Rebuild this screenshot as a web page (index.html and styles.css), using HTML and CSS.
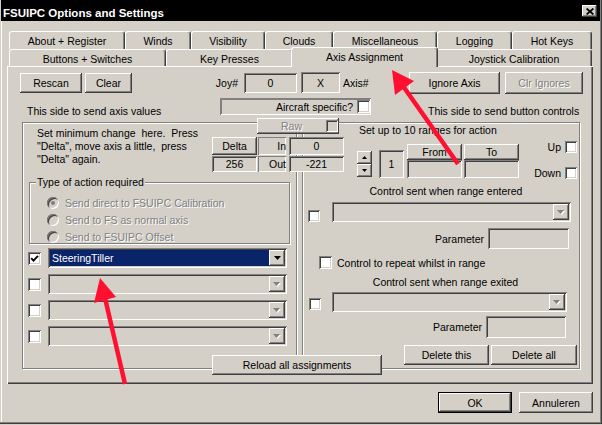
FILE: index.html
```html
<!DOCTYPE html>
<html>
<head>
<meta charset="UTF-8">
<title>FSUIPC Options and Settings</title>
<link rel="stylesheet" href="styles.css">
</head>
<body>
<div class="window">
	<div class="titlebar">
		<span class="title">FSUIPC Options and Settings</span>
		<span class="btn closebtn"><svg width="8" height="7" viewBox="0 0 8 7"><path d="M0.6 0.5L7.4 6.5M7.4 0.5L0.6 6.5" stroke="#000" stroke-width="1.7"/></svg></span>
	</div>

	<div class="tabs">
		<div class="tabrow back">
			<div class="tab">About + Register</div>
			<div class="tab">Winds</div>
			<div class="tab">Visibility</div>
			<div class="tab">Clouds</div>
			<div class="tab">Miscellaneous</div>
			<div class="tab">Logging</div>
			<div class="tab">Hot Keys</div>
		</div>
		<div class="tabrow front">
			<div class="tab">Buttons + Switches</div>
			<div class="tab">Key Presses</div>
			<div class="tab active">Axis Assignment</div>
			<div class="tab">Joystick Calibration</div>
		</div>
	</div>

	<div class="panel">
		<div class="toprow">
			<div class="btn b-rescan">Rescan</div>
			<div class="btn b-clear">Clear</div>
			<div class="lbl-joy">Joy#</div>
			<div class="field f-joy">0</div>
			<div class="field f-axis">X</div>
			<div class="lbl-axis">Axis#</div>
			<div class="btn b-ignore">Ignore Axis</div>
			<div class="btn b-clr dis">Clr Ignores</div>
		</div>

		<div class="siderow">
			<div class="sidelabel left">This side to send axis values</div>
			<div class="static aircraft">
				<span>Aircraft specific?</span>
				<span class="check"></span>
			</div>
			<div class="sidelabel right">This side to send button controls</div>
		</div>

		<div class="frames">
			<div class="frame left">
				<div class="deltatop">
					<div class="hint">Set minimum change  here.  Press
"Delta", move axis a little,  press
"Delta" again.</div>
					<div class="deltabox">
						<div class="btn raw">
							<span class="dis">Raw</span>
							<span class="check off"></span>
						</div>
						<div class="drow r1">
							<div class="btn d-key">Delta</div>
							<div class="static d-io">In</div>
							<div class="field d-val">0</div>
						</div>
						<div class="drow r2">
							<div class="field d-key">256</div>
							<div class="static d-io">Out</div>
							<div class="field d-val">-221</div>
						</div>
					</div>
				</div>

				<div class="frame typeframe">
					<span class="legend">Type of action required</span>
					<div class="radiorow"><span class="radio on"></span><span class="dis">Send direct to FSUIPC Calibration</span></div>
					<div class="radiorow"><span class="radio"></span><span class="dis">Send to FS as normal axis</span></div>
					<div class="radiorow"><span class="radio"></span><span class="dis">Send to FSUIPC Offset</span></div>
				</div>

				<div class="axisrows">
					<div class="axisrow">
						<span class="check"><svg width="9" height="9" viewBox="0 0 9 9"><path d="M1.2 4.2l2.3 2.4L8 1.8" fill="none" stroke="#000" stroke-width="1.9"/></svg></span>
						<div class="combo sel">
							<span class="cval">SteeringTiller</span>
							<span class="btn carrow"><svg width="7" height="4"><path d="M0 0h7l-3.5 4z"/></svg></span>
						</div>
					</div>
					<div class="axisrow">
						<span class="check"></span>
						<div class="combo">
							<span class="cval"></span>
							<span class="btn carrow"><svg width="8" height="5"><path d="M1 1h7l-3.5 4z" fill="#fff"/><path d="M0 0h7l-3.5 4z" fill="#808080"/></svg></span>
						</div>
					</div>
					<div class="axisrow">
						<span class="check"></span>
						<div class="combo">
							<span class="cval"></span>
							<span class="btn carrow"><svg width="8" height="5"><path d="M1 1h7l-3.5 4z" fill="#fff"/><path d="M0 0h7l-3.5 4z" fill="#808080"/></svg></span>
						</div>
					</div>
					<div class="axisrow">
						<span class="check"></span>
						<div class="combo">
							<span class="cval"></span>
							<span class="btn carrow"><svg width="8" height="5"><path d="M1 1h7l-3.5 4z" fill="#fff"/><path d="M0 0h7l-3.5 4z" fill="#808080"/></svg></span>
						</div>
					</div>
				</div>
			</div>

			<div class="frame right">
				<div class="rangetitle">Set up to 10 ranges for action</div>
				<div class="rangerow">
					<div class="spin">
						<span class="btn"><svg width="5" height="3"><path d="M2.5 0L5 3H0z"/></svg></span>
						<span class="btn"><svg width="5" height="3"><path d="M0 0h5L2.5 3z"/></svg></span>
					</div>
					<div class="field rangeno">1</div>
					<div class="rangecol">
						<div class="btn">From</div>
						<div class="field"></div>
					</div>
					<div class="rangecol">
						<div class="btn">To</div>
						<div class="field"></div>
					</div>
					<div class="updown">
						<div class="ud">Up <span class="check"></span></div>
						<div class="ud">Down <span class="check"></span></div>
					</div>
				</div>

				<div class="ctltitle">Control sent when range entered</div>
				<div class="ctlrow">
					<span class="check"></span>
					<div class="combo">
						<span class="cval"></span>
						<span class="btn carrow"><svg width="8" height="5"><path d="M1 1h7l-3.5 4z" fill="#fff"/><path d="M0 0h7l-3.5 4z" fill="#808080"/></svg></span>
					</div>
				</div>
				<div class="paramrow">
					<span>Parameter</span>
					<div class="field"></div>
				</div>
				<div class="repeatrow">
					<span class="check"></span>
					<span>Control to repeat whilst in range</span>
				</div>

				<div class="ctltitle exit">Control sent when range exited</div>
				<div class="ctlrow exit">
					<span class="check"></span>
					<div class="combo">
						<span class="cval"></span>
						<span class="btn carrow"><svg width="8" height="5"><path d="M1 1h7l-3.5 4z" fill="#fff"/><path d="M0 0h7l-3.5 4z" fill="#808080"/></svg></span>
					</div>
				</div>
				<div class="paramrow exit">
					<span>Parameter</span>
					<div class="field"></div>
				</div>
				<div class="deleterow">
					<div class="btn b-delthis">Delete this</div>
					<div class="btn b-delall">Delete all</div>
				</div>
			</div>
		</div>

		<div class="btn reload">Reload all assignments</div>
	</div>

	<div class="dialog-buttons">
		<div class="btn default">OK</div>
		<div class="btn">Annuleren</div>
	</div>
</div>

<!-- red annotation arrows drawn over the screenshot -->
<svg class="annotations" width="602" height="425" viewBox="0 0 602 425">
	<line x1="458" y1="164" x2="403" y2="86" stroke="#FF1030" stroke-width="4.5"/>
	<polygon points="392,70 414,81 395,95" fill="#FF1030"/>
	<line x1="125" y1="384" x2="105" y2="298" stroke="#FF1030" stroke-width="4.5"/>
	<polygon points="100,278 116,297 94,303" fill="#FF1030"/>
</svg>
</body>
</html>
```

FILE: styles.css
```css
* {
	box-sizing: border-box;
}

body {
	position: relative;
	margin: 0;
	width: 602px;
	height: 425px;
	overflow: hidden;
	background: #D4D0C8;
	font: 10.5px "Liberation Sans", Arial, sans-serif;
	color: #000;
}

.window {
	width: 602px;
	height: 424px;
	padding: 0 2px 0 1px;
	box-shadow: inset -1px -1px #404040, inset -2px -2px #808080, inset 1px 0 #D4D0C8, inset 2px 0 #FFF;
}

.annotations {
	position: absolute;
	left: 0;
	top: 0;
	z-index: 10;
	pointer-events: none;
}

/* ---------- title bar ---------- */

.titlebar {
	display: flex;
	justify-content: space-between;
	align-items: center;
	height: 21px;
	padding: 0 3px 0 2px;
	background: #000;
	color: #FFF;
}

.title {
	margin-top: 4px;
	font-size: 11.5px;
	font-weight: bold;
	white-space: nowrap;
}

.closebtn {
	width: 15px;
	height: 12px;
	align-self: flex-start;
	margin-top: 5px;
}

/* ---------- common controls ---------- */

.btn {
	display: flex;
	align-items: center;
	justify-content: center;
	background: #D4D0C8;
	white-space: nowrap;
	box-shadow: inset -1px -1px #404040, inset 1px 1px #FFF, inset -2px -2px #808080;
}

.btn.default {
	box-shadow: inset 0 0 0 1px #000, inset -2px -2px #404040, inset 2px 2px #FFF, inset -3px -3px #808080;
}

.field {
	display: flex;
	align-items: center;
	justify-content: center;
	background: #D4D0C8;
	box-shadow: inset 1px 1px #808080, inset -1px -1px #FFF, inset 2px 2px #404040, inset -2px -2px #D4D0C8;
}

.static {
	display: flex;
	align-items: center;
	box-shadow: inset 1px 1px #808080, inset -1px -1px #FFF;
}

.dis {
	color: #808080;
	text-shadow: 1px 1px #FFF;
}

.check {
	flex: none;
	display: flex;
	align-items: center;
	justify-content: center;
	width: 13px;
	height: 13px;
	background: #FFF;
	box-shadow: inset 1px 1px #808080, inset -1px -1px #FFF, inset 2px 2px #404040, inset -2px -2px #D4D0C8;
}

.check.off {
	background: #D4D0C8;
}

.radio {
	flex: none;
	display: flex;
	align-items: center;
	justify-content: center;
	width: 12px;
	height: 12px;
	border-radius: 50%;
	background: #D4D0C8;
	box-shadow: inset 1px 1px #808080, inset -1px -1px #FFF, inset 2px 2px #404040, inset -2px -2px #D4D0C8;
}

.radio.on::after {
	content: "";
	width: 4px;
	height: 4px;
	border-radius: 50%;
	background: #808080;
}

.combo {
	display: flex;
	height: 20px;
	padding: 2px;
	background: #D4D0C8;
	box-shadow: inset 1px 1px #808080, inset -1px -1px #FFF, inset 2px 2px #404040, inset -2px -2px #D4D0C8;
}

.combo .cval {
	flex: 1;
	display: flex;
	align-items: center;
	padding-left: 2px;
}

.combo.sel .cval {
	background: #0A246A;
	color: #FFF;
}

.combo .carrow {
	flex: none;
	width: 16px;
}

.frame {
	border: 1px solid #808080;
	box-shadow: inset 1px 1px #FFF, 1px 1px #FFF;
}

/* ---------- tabs ---------- */

.tabs {
	margin: 10px 0 0 8px;
}

.tabrow {
	display: flex;
}

.tab {
	flex: none;
	text-align: center;
	white-space: nowrap;
	background: #D4D0C8;
	border-top: 1px solid #FFF;
	border-left: 1px solid #FFF;
	border-right: 1px solid #404040;
	border-radius: 3px 3px 0 0;
	box-shadow: inset -1px 0 #808080;
}

.back .tab {
	height: 18px;
	padding-top: 1px;
	line-height: 17px;
}

.front {
	height: 17px;
}

.front .tab {
	height: 17px;
	padding-top: 1px;
	line-height: 16px;
}

.back .tab:nth-child(1) { width: 116px; }
.back .tab:nth-child(2) { width: 66px; }
.back .tab:nth-child(3) { width: 74px; }
.back .tab:nth-child(4) { width: 68px; }
.back .tab:nth-child(5) { width: 104px; }
.back .tab:nth-child(6) { width: 75px; }
.back .tab:nth-child(7) { width: 80px; }

.front .tab:nth-child(1) { width: 157px; }
.front .tab:nth-child(2) { width: 127px; }
.front .tab:nth-child(3) { width: 143px; }
.front .tab:nth-child(4) { width: 156px; }

.front .tab.active {
	position: relative;
	z-index: 2;
	width: 147px;
	height: 20px;
	margin: -2px -2px 0 -2px;
}

/* ---------- tab page ---------- */

.panel {
	position: relative;
	z-index: 1;
	width: 586px;
	height: 318px;
	margin-left: 6px;
	padding-top: 5px;
	box-shadow: inset 1px 1px #FFF, inset -1px -1px #404040, inset -2px -2px #808080;
}

.toprow {
	display: flex;
	align-items: center;
	height: 23px;
	padding-left: 13px;
}

.b-rescan { width: 62px; height: 20px; }
.b-clear { width: 47px; height: 20px; margin-left: 3px; }
.lbl-joy { width: 106px; text-align: right; }
.f-joy { width: 53px; height: 20px; margin-left: 6px; }
.f-axis { width: 39px; height: 21px; margin-left: 4px; }
.lbl-axis { width: 66px; margin-left: 3px; }
.b-ignore { width: 91px; height: 22px; }
.b-clr { width: 78px; height: 22px; margin-left: 5px; }

.siderow {
	display: flex;
	height: 20px;
	margin-top: 4px;
	padding-left: 20px;
}

.sidelabel {
	align-self: flex-end;
	line-height: 13px;
	white-space: nowrap;
}

.sidelabel.left { width: 193px; }
.sidelabel.right { margin-left: 57px; }

.aircraft {
	width: 151px;
	height: 17px;
	justify-content: flex-end;
	gap: 4px;
	padding-right: 1px;
	box-shadow: inset 1px 1px #808080, inset -1px -1px #FFF, inset 2px 2px #808080;
}

.frames {
	display: flex;
	margin-top: 4px;
	padding-left: 15px;
}

.frame.left {
	width: 275px;
	height: 247px;
}

.frame.right {
	width: 278px;
	height: 247px;
	margin-left: 5px;
}

/* left side */

.deltatop {
	display: flex;
}

.hint {
	flex: none;
	width: 175px;
	margin: 4px 0 0 14px;
	line-height: 13px;
	white-space: pre;
}

.deltabox {
	flex: none;
	position: relative;
	z-index: 1;
	width: 132px;
	margin-top: -5px;
}

.raw {
	width: 82px;
	height: 16px;
	margin-left: 45px;
	padding-right: 1px;
}

.raw .dis {
	flex: 1;
	text-align: center;
}

.raw .check {
	width: 12px;
	height: 12px;
}

.drow {
	display: flex;
	margin-top: 1px;
}

.drow.r1 {
	margin-top: 3px;
}

.drow.r1 > * { height: 18px; }
.drow.r2 > * { height: 16px; }

.d-key { width: 45px; }
.d-io { width: 28px; margin-left: 1px; justify-content: flex-end; overflow: hidden; }
.d-val { width: 55px; margin-left: 3px; }

.typeframe {
	position: relative;
	width: 261px;
	height: 62px;
	margin: 10px 0 0 6px;
	padding: 11px 0 0 17px;
}

.typeframe .legend {
	position: absolute;
	left: 6px;
	top: -7px;
	padding: 0 1px;
	line-height: 13px;
	background: #D4D0C8;
	white-space: nowrap;
}

.radiorow {
	display: flex;
	align-items: center;
	gap: 6px;
	height: 17px;
	white-space: nowrap;
}

.axisrows {
	margin-top: 4px;
	padding-left: 5px;
}

.axisrow {
	display: flex;
	align-items: center;
	height: 20px;
	margin-bottom: 6px;
}

.axisrow:nth-child(3) {
	margin-top: 2px;
}

.axisrow .check {
	margin-right: 7px;
}

.axisrow .combo {
	width: 239px;
}

/* right side */

.rangetitle {
	margin: 1px 0 0 56px;
	line-height: 13px;
}

.rangerow {
	display: flex;
	align-items: flex-start;
	margin-top: 4px;
}

.spin {
	display: flex;
	flex-direction: column;
	width: 15px;
	margin: 10px 0 0 54px;
}

.spin .btn {
	height: 13px;
}

.rangeno {
	width: 25px;
	height: 28px;
	margin: 9px 0 0 7px;
}

.rangecol {
	width: 55px;
	margin: 3px 0 0 3px;
}

.rangecol + .rangecol {
	margin-left: 2px;
}

.rangecol .btn { height: 16px; }
.rangecol .field { height: 18px; }

.updown {
	width: 58px;
}

.ud {
	display: flex;
	justify-content: flex-end;
	align-items: center;
	gap: 4px;
	height: 12px;
}

.ud + .ud {
	margin-top: 14px;
}

.ud .check {
	width: 12px;
	height: 12px;
}

.ctltitle {
	margin-top: 6px;
	padding-left: 10px;
	line-height: 13px;
	text-align: center;
}

.ctltitle.exit {
	margin-top: 7px;
	padding-left: 9px;
}

.ctlrow {
	display: flex;
	align-items: flex-end;
	margin-top: 4px;
	padding-left: 5px;
}

.ctlrow .check {
	width: 12px;
	height: 12px;
	margin-right: 12px;
}

.ctlrow .combo {
	width: 239px;
}

.ctlrow.exit {
	margin-top: 3px;
	padding-left: 6px;
}

.ctlrow.exit .check {
	margin: 0 11px 2px 0;
}

.ctlrow.exit .combo {
	width: 235px;
}

.paramrow {
	display: flex;
	justify-content: flex-end;
	align-items: center;
	gap: 4px;
	margin-top: 6px;
	padding-right: 10px;
}

.paramrow .field {
	width: 81px;
	height: 21px;
}

.paramrow.exit {
	margin-top: 4px;
	padding-right: 13px;
}

.paramrow.exit .field {
	width: 80px;
	height: 22px;
}

.repeatrow {
	display: flex;
	align-items: center;
	gap: 5px;
	height: 13px;
	margin-top: 7px;
	padding-left: 16px;
}

.deleterow {
	display: flex;
	justify-content: flex-end;
	gap: 2px;
	margin-top: 7px;
	padding-right: 2px;
}

.b-delthis { width: 85px; height: 20px; }
.b-delall { width: 86px; height: 20px; }

.reload {
	position: absolute;
	z-index: 2;
	left: 205px;
	top: 289px;
	width: 170px;
	height: 20px;
}

/* ---------- OK / Annuleren ---------- */

.dialog-buttons {
	display: flex;
	justify-content: flex-end;
	gap: 7px;
	width: 586px;
	margin: 8px 0 0 6px;
}

.dialog-buttons .btn {
	width: 74px;
	height: 21px;
}
```
